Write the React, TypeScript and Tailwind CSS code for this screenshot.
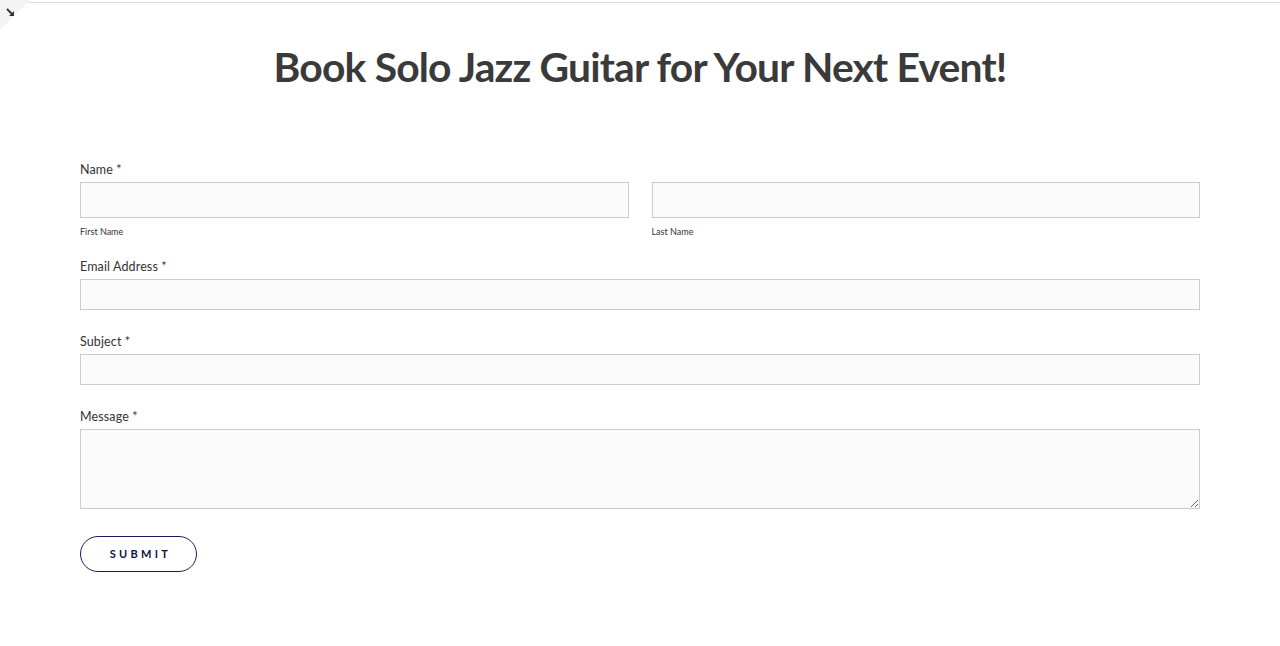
import { useState } from "react";

const labelFont = { fontFamily: '"Lato", "Open Sans", sans-serif' };

const Field = ({ label, children }: { label: string; children: React.ReactNode }) => (
  <div className="flex flex-col">
    <label className="text-[12.5px] text-[#333] tracking-[0.01em] mb-[4px] leading-[16px]">{label}</label>
    {children}
  </div>
);

const inputCls = "w-full bg-[#fafafa] border border-[#ccc] outline-none px-3 text-sm text-[#333]";

export default function App() {
  const [form, setForm] = useState({ first: "", last: "", email: "", subject: "", message: "" });
  const set = (k: keyof typeof form) => (e: React.ChangeEvent<HTMLInputElement | HTMLTextAreaElement>) =>
    setForm({ ...form, [k]: e.target.value });

  return (
    <div className="min-h-[646px] bg-white relative overflow-hidden" style={labelFont}>
      {/* corner fold + top rule */}
      <div className="absolute top-0 left-0 w-[30px] h-[30px] bg-[#f3f3f3] [clip-path:polygon(0_0,100%_0,0_100%)]" />
      <svg className="absolute top-[8px] left-[6px]" width="9" height="9" viewBox="0 0 9 9">
        <path d="M1 1 L6 6" stroke="#333" strokeWidth="1.8" />
        <path d="M8 3 L8 8 L3 8 Z" fill="#333" />
      </svg>
      <div className="h-[3px] border-b border-[#ddd] ml-[28px]" />

      <h1
        className="text-center text-[40.8px] font-bold text-[#3a3a3a] tracking-[-0.02em] mt-[40px] leading-[48px]"
        style={{ fontFamily: '"Lato", sans-serif' }}
      >
        Book Solo Jazz Guitar for Your Next Event!
      </h1>

      <form className="px-[80px] mt-[71px] flex flex-col" onSubmit={(e) => e.preventDefault()}>
        <Field label="Name *">
          <div className="grid grid-cols-2 gap-[23px]">
            <div className="flex flex-col">
              <input className={`${inputCls} h-[36px]`} value={form.first} onChange={set("first")} />
              <span className="text-[9px] text-[#333] mt-[7px] leading-[13px]">First Name</span>
            </div>
            <div className="flex flex-col">
              <input className={`${inputCls} h-[36px]`} value={form.last} onChange={set("last")} />
              <span className="text-[9px] text-[#333] mt-[7px] leading-[13px]">Last Name</span>
            </div>
          </div>
        </Field>

        <div className="mt-[21px]">
          <Field label="Email Address *">
            <input type="email" className={`${inputCls} h-[31px]`} value={form.email} onChange={set("email")} />
          </Field>
        </div>

        <div className="mt-[24px]">
          <Field label="Subject *">
            <input className={`${inputCls} h-[31px]`} value={form.subject} onChange={set("subject")} />
          </Field>
        </div>

        <div className="mt-[24px]">
          <Field label="Message *">
            <textarea className={`${inputCls} h-[80px] py-2 block`} value={form.message} onChange={set("message")} />
          </Field>
        </div>

        <div className="mt-[27px]">
          <button
            type="submit"
            className="h-[36px] w-[117px] rounded-full border border-[#1b1b5e] text-[#101048] text-[11px] font-bold tracking-[0.3em] pl-[4px]"
          >
            SUBMIT
          </button>
        </div>
      </form>
    </div>
  );
}
